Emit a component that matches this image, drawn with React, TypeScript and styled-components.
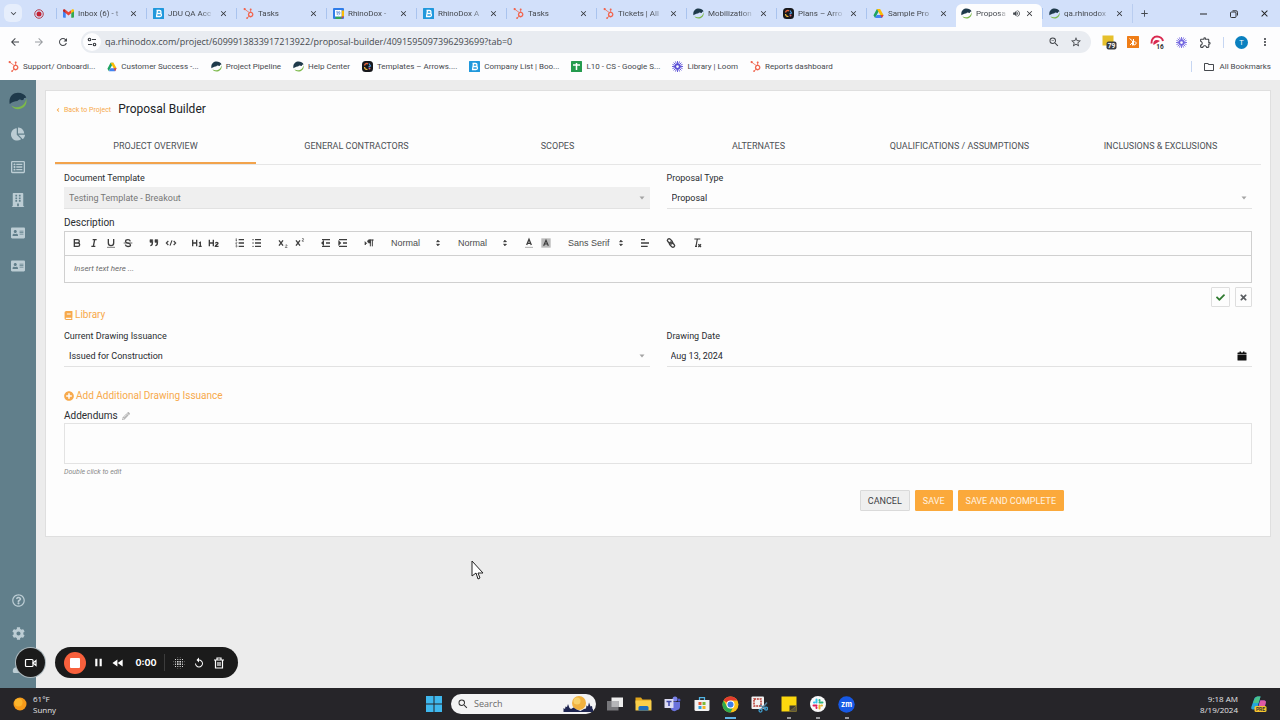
import React from "react";
import styled, { createGlobalStyle, css } from "styled-components";
import {
  FaHubspot,
  FaChartPie,
  FaRegListAlt,
  FaBuilding,
  FaAddressCard,
  FaRegQuestionCircle,
  FaCog,
  FaUser,
  FaBook,
  FaPlusCircle,
  FaPencilAlt,
  FaCheck,
  FaTimes,
  FaAngleLeft,
} from "react-icons/fa";
import {
  MdArrowBack,
  MdArrowForward,
  MdRefresh,
  MdZoomOut,
  MdStarBorder,
  MdOutlineExtension,
  MdMoreVert,
  MdOutlineFolder,
  MdKeyboardArrowDown,
  MdClose,
  MdAdd,
  MdVolumeUp,
  MdSearch,
  MdPause,
  MdFastRewind,
  MdBlurOn,
  MdReplay,
} from "react-icons/md";

const ui = `"Open Sans", "Noto Sans", sans-serif`;
const app = `Roboto, "Liberation Sans", sans-serif`;
const orange = "#f7a94b";

const GlobalStyle = createGlobalStyle`
  *, *::before, *::after { box-sizing: border-box; }
  body { margin: 0; font-family: ${app}; color: #2d3033; }
  button, input, select, textarea { font: inherit; color: inherit; margin: 0; }
  button { border: 0; padding: 0; background: none; cursor: pointer; }
  a { color: inherit; text-decoration: none; }
  svg { display: block; flex: none; }
`;

const Screen = styled.div`
  display: flex;
  flex-direction: column;
  min-height: 100vh;
  position: relative;
  background: #ececec;
  overflow: hidden;
`;

/* ---------- browser ---------- */

const TabStrip = styled.div`
  display: flex;
  align-items: flex-end;
  height: 27px;
  background: #d2e0fa;
  font: 8px/12px ${app};
  color: #44484e;
`;

const TabSearch = styled.button`
  display: grid;
  place-items: center;
  width: 18px;
  height: 18px;
  margin: 0 0 5px 4px;
  border-radius: 6px;
  background: #e6eefc;
`;

const PinnedTab = styled.button`
  display: grid;
  place-items: center;
  width: 34px;
  height: 22px;
  padding-bottom: 4px;
`;

const Tab = styled.div<{ $active?: boolean }>`
  display: flex;
  align-items: center;
  flex: 0 1 ${(p) => (p.$active ? 86 : 90)}px;
  min-width: 0;
  height: 23px;
  padding: 0 8px 4px 7px;
  gap: 4px;
  ${(p) =>
    p.$active
      ? css`
          background: #fdfdfe;
          border-radius: 6px 6px 0 0;
          padding-left: 5px;
        `
      : css`
          background: linear-gradient(#a9c3ee, #a9c3ee) left 0 top 4px / 1px 11px no-repeat;
        `}
`;

const TabTitle = styled.a`
  flex: 1;
  min-width: 0;
  overflow: hidden;
  white-space: nowrap;
  mask-image: linear-gradient(90deg, #000 70%, transparent);
`;

const TabClose = styled.button`
  display: grid;
  place-items: center;
  width: 9px;
  color: #2f3135;
`;

const NewTab = styled.button`
  display: grid;
  place-items: center;
  width: 24px;
  height: 19px;
  margin-bottom: 4px;
  border-left: 1px solid #b9cdf0;
`;

const WindowControls = styled.div`
  display: flex;
  margin-left: auto;
  height: 27px;
  padding-right: 1px;
`;

const WindowButton = styled.button`
  display: grid;
  place-items: center;
  width: 30px;
  color: #222;
`;

const AddressRow = styled.div`
  display: flex;
  align-items: center;
  height: 30px;
  padding: 0 8px 0 3px;
  background: #fdfdfe;
  color: #43464b;
`;

const IconButton = styled.button<{ $w?: number }>`
  display: grid;
  place-items: center;
  width: ${(p) => p.$w ?? 24}px;
  height: 22px;
`;

const AddressBar = styled.div`
  display: flex;
  align-items: center;
  flex: 1;
  min-width: 0;
  height: 22px;
  margin: 0 6px;
  padding: 0 4px 0 2px;
  border-radius: 11px;
  background: #e9ecf1;
`;

const SiteInfo = styled.button`
  display: grid;
  place-items: center;
  width: 18px;
  height: 18px;
  border-radius: 50%;
  background: #fdfdfe;
`;

const AddressInput = styled.input`
  flex: 1;
  min-width: 0;
  padding: 0 0 0 4px;
  border: 0;
  background: none;
  font: 9px/14px ${ui};
  color: #45494e;
`;

const Divider = styled.span`
  width: 1px;
  height: 11px;
  margin-left: 6px;
  background: #c6d6f2;
`;

const Profile = styled.button`
  display: grid;
  place-items: center;
  width: 13px;
  height: 13px;
  margin: 0 10px 0 11px;
  border-radius: 50%;
  background: #0a80bf;
  color: #fff;
  font: 8px/12px ${ui};
`;

const BookmarkRow = styled.nav`
  display: flex;
  align-items: center;
  gap: 12px;
  height: 23px;
  padding: 0 9px 4px 8px;
  background: #fdfdfe;
  font: 8px/12px ${app};
  color: #46494e;
`;

const Bookmark = styled.a`
  display: flex;
  align-items: center;
  gap: 4px;
  white-space: nowrap;
`;

const AllBookmarks = styled.div`
  display: flex;
  align-items: center;
  gap: 11px;
  margin-left: auto;
`;

/* ---------- application ---------- */

const Workspace = styled.div`
  display: flex;
  flex: 1;
`;

const Sidebar = styled.nav`
  display: flex;
  flex-direction: column;
  align-items: center;
  width: 36px;
  padding: 11px 0 5px;
  background: #617f8b;
  color: #bccdd4;
`;

const SideLink = styled.a<{ $push?: boolean }>`
  display: grid;
  place-items: center;
  width: 36px;
  height: 33px;
  margin-top: ${(p) => (p.$push ? "auto" : "0")};
`;

const BrandLink = styled.a`
  display: grid;
  place-items: center;
  height: 20px;
  margin-bottom: 6px;
`;

const Main = styled.main`
  flex: 1;
  min-width: 0;
  padding: 10px 9px 0;
`;

const Card = styled.section`
  padding: 0 9px 25px;
  border: 1px solid #dfdfdf;
  background: #fdfdfd;
`;

const CardHeader = styled.header`
  display: flex;
  align-items: center;
  gap: 7px;
  height: 35px;
`;

const BackLink = styled.a`
  display: flex;
  align-items: center;
  gap: 3px;
  padding-top: 3px;
  font-size: 7px;
  line-height: 12px;
  color: ${orange};
`;

const Title = styled.h1`
  margin: 0;
  font-size: 12px;
  font-weight: 400;
  line-height: 20px;
  color: #202327;
`;

const StepTabs = styled.div`
  display: grid;
  grid-template-columns: repeat(6, 1fr);
  border-bottom: 1px solid #e6e6e6;
`;

const StepTab = styled.button<{ $active?: boolean }>`
  height: 38px;
  padding-top: 3px;
  border-bottom: 2px solid ${(p) => (p.$active ? "#f2a34c" : "transparent")};
  font-size: 9px;
  line-height: 12px;
  color: #4d5156;
`;

const Form = styled.form`
  display: flex;
  flex-direction: column;
  padding: 6px 9px 0;
`;

const Columns = styled.div`
  display: grid;
  grid-template-columns: 1fr 1fr;
  gap: 17px;
`;

const Field = styled.div`
  display: flex;
  flex-direction: column;
  min-width: 0;
`;

const Label = styled.label<{ $large?: boolean }>`
  font-size: ${(p) => (p.$large ? 10 : 9)}px;
  line-height: 14px;
  color: #2a2d31;
`;

const Control = styled.div<{ $disabled?: boolean }>`
  display: flex;
  align-items: center;
  height: 22px;
  margin-top: 2px;
  padding-right: 5px;
  border-bottom: 1px solid #e2e2e2;
  background: ${(p) => (p.$disabled ? "#efefef" : "none")};
  color: ${(p) => (p.$disabled ? "#777" : "#26292d")};
  font-size: 9px;
`;

const plain = css`
  flex: 1;
  min-width: 0;
  padding: 0 0 0 5px;
  border: 0;
  background: none;
  appearance: none;
  opacity: 1;
  line-height: 14px;
`;

const Select = styled.select`
  ${plain}
`;

const DateInput = styled.input`
  ${plain}
  padding-left: 4px;
`;

const CalendarButton = styled.button`
  color: #111;
`;

const DescriptionLabel = styled(Label)`
  margin-top: 7px;
`;

const Editor = styled.div`
  margin-top: 1px;
  border: 1px solid #d0d0d0;
`;

const EditorToolbar = styled.div`
  display: flex;
  align-items: center;
  gap: 9px;
  height: 24px;
  padding: 0 0 1px 3px;
  border-bottom: 1px solid #d0d0d0;
`;

const ToolGroup = styled.div`
  display: flex;
`;

const ToolButton = styled.button`
  display: grid;
  place-items: center;
  width: 17px;
  height: 16px;
  color: #3d3d3d;
`;

const Picker = styled.div<{ $w: number }>`
  display: flex;
  align-items: center;
  width: ${(p) => p.$w}px;
  font: 9px/14px "Liberation Sans", Arial, sans-serif;
  color: #4c4c4c;
`;

const EditorText = styled.textarea`
  display: block;
  width: 100%;
  height: 26px;
  padding: 6px 9px;
  border: 0;
  background: none;
  resize: none;
  font: italic 8px/14px ${app};
  &::placeholder {
    color: #6a6a6a;
    opacity: 1;
  }
`;

const EditorActions = styled.div`
  display: flex;
  justify-content: flex-end;
  gap: 5px;
  margin: 4px 0 1px;
`;

const SquareButton = styled.button<{ $w: number }>`
  display: grid;
  place-items: center;
  width: ${(p) => p.$w}px;
  height: 20px;
  border: 1px solid #dedede;
  border-radius: 1px;
  color: #5a5d61;
`;

const ActionLink = styled.button`
  display: flex;
  align-items: center;
  gap: 2px;
  align-self: flex-start;
  font-size: 10px;
  line-height: 14px;
  color: ${orange};
`;

const LibraryButton = styled(ActionLink)`
  margin-bottom: 7px;
`;

const AddButton = styled(ActionLink)`
  margin: 22px 0 6px;
`;

const LabelRow = styled.div`
  display: flex;
  align-items: center;
  gap: 4px;
`;

const Addendums = styled.textarea`
  height: 41px;
  border: 1px solid #e3e3e3;
  background: none;
  resize: none;
`;

const Hint = styled.p`
  margin: 2px 0 0;
  font-size: 7px;
  font-style: italic;
  line-height: 12px;
  color: #8a8a8a;
`;

const FormActions = styled.div`
  display: flex;
  justify-content: flex-end;
  gap: 5px;
  margin-top: 12px;
  padding-right: 188px;
`;

const FormButton = styled.button<{ $primary?: boolean }>`
  height: 21px;
  padding: 0 7px;
  border: 1px solid ${(p) => (p.$primary ? "#fba93b" : "#dadada")};
  border-radius: 1px;
  background: ${(p) => (p.$primary ? "#fba93b" : "#efefef")};
  color: ${(p) => (p.$primary ? "#fff3e2" : "#3f4246")};
  font-size: 9px;
  line-height: 12px;
`;

/* ---------- recorder ---------- */

const Recorder = styled.div`
  position: absolute;
  left: 16px;
  bottom: 42px;
  display: flex;
  align-items: center;
  gap: 10px;
  color: #fff;
`;

const CameraButton = styled.button`
  display: grid;
  place-items: center;
  width: 29px;
  height: 29px;
  border-radius: 50%;
  background: #1b1b1b;
  box-shadow: 0 0 0 1px #aab6bb;
`;

const RecorderPill = styled.div`
  display: flex;
  align-items: center;
  width: 183px;
  height: 31px;
  padding: 0 9px;
  border-radius: 16px;
  background: #1b1b1b;
`;

const StopButton = styled.button`
  display: grid;
  place-items: center;
  width: 22px;
  height: 22px;
  margin-right: 2px;
  border-radius: 50%;
  background: #f8603c;
`;

const RecorderButton = styled.button`
  display: grid;
  place-items: center;
  width: 20px;
  height: 22px;
`;

const Elapsed = styled.time`
  flex: 1;
  text-align: center;
  font: 700 9px/14px Inter, sans-serif;
`;

const RecorderDivider = styled.span`
  width: 1px;
  height: 17px;
  margin-right: 4px;
  background: #3c3c3c;
`;

const Pointer = styled.svg`
  position: absolute;
  left: 471px;
  top: 560px;
`;

/* ---------- taskbar ---------- */

const Taskbar = styled.footer`
  display: grid;
  grid-template-columns: 1fr auto 1fr;
  align-items: center;
  height: 32px;
  background: #262529;
  font: 8px/11px ${ui};
  color: #e4e4e6;
`;

const Weather = styled.button`
  display: flex;
  align-items: center;
  gap: 6px;
  padding-left: 13px;
  text-align: left;
`;

const TaskIcons = styled.div`
  display: flex;
  align-items: center;
`;

const TaskButton = styled.button<{ $mark?: string }>`
  display: grid;
  place-items: center;
  width: 29px;
  height: 32px;
  background: ${(p) =>
    p.$mark
      ? `linear-gradient(${p.$mark}, ${p.$mark}) center bottom 1px / ${p.$mark === "#63b4e6" ? 11 : 4}px 2px no-repeat`
      : "none"};
`;

const SearchBox = styled.label`
  display: flex;
  align-items: center;
  width: 145px;
  height: 20px;
  margin: 0 4px 0 3px;
  padding: 0 3px 0 6px;
  border-radius: 10px;
  background: #f3f3f4;
  color: #333;
`;

const SearchInput = styled.input`
  flex: 1;
  min-width: 0;
  padding: 0 0 0 5px;
  border: 0;
  background: none;
  font: 9px/14px ${ui};
  &::placeholder {
    color: #6b6b6b;
    opacity: 1;
  }
`;

const Tray = styled.div`
  display: flex;
  align-items: center;
  justify-content: flex-end;
  gap: 12px;
  padding-right: 13px;
  text-align: right;
`;

const Stack = styled.span`
  display: flex;
  flex-direction: column;
  padding-bottom: 1px;
`;

/* ---------- drawings ---------- */

type Size = { s?: number };

const Rhino = ({ s = 12 }: Size) => (
  <svg width={s} height={s} viewBox="0 0 24 24">
    <path d="M1 16C-1 7 5 1 12 1c5 0 9 2 11 6-1 1-2 1-3 1 0 2-1 3-3 3-2-2-4-1-6 1-3 0-6 1-10 4z" fill="#1f3a4b" />
    <path d="M23 9c2 8-4 14-11 14-4 0-7-2-9-5 4 3 9 3 13 1 4-2 6-5 7-10z" fill="#7cb94a" />
  </svg>
);

const Hub = ({ s = 12 }: Size) => <FaHubspot size={s} color="#f0654f" />;

const BlueB = ({ s = 11 }: Size) => (
  <svg width={s} height={s} viewBox="0 0 22 22">
    <rect width="22" height="22" rx="1" fill="#2098dc" />
    <path d="M7 5h6a3 3 0 0 1 0 6H9h5a3 3 0 0 1 0 6H6M9 5L7 17" fill="none" stroke="#fff" strokeWidth="2.6" />
  </svg>
);

const Gmail = () => (
  <svg width="11" height="9" viewBox="0 0 24 18">
    <path d="M0 3v13a2 2 0 0 0 2 2h4V7z" fill="#4285f4" />
    <path d="M24 3v13a2 2 0 0 1-2 2h-4V7z" fill="#34a853" />
    <path d="M6 1.500l6 5 6-5v7l-6 5-6-5z" fill="#ea4335" />
    <path d="M0 2.500C0 0 3-1 5 .800L6 1.500v7L0 4z" fill="#c5221f" />
    <path d="M24 2.500C24 0 21-1 19 .800L18 1.500v7L24 4z" fill="#fbbc04" />
  </svg>
);

const Calendar = () => (
  <svg width="11" height="11" viewBox="0 0 22 22">
    <rect width="22" height="22" rx="2" fill="#2f7de9" />
    <path d="M17 5h5v12h-5z" fill="#fbbc04" />
    <path d="M5 17h12v5H5z" fill="#34a853" />
    <path d="M17 22v-5h5z" fill="#ea4335" />
    <rect x="4" y="4" width="13" height="13" fill="#fff" />
    <path d="M6.500 8l2-1.200V14M11 14c3 0 3.500-7 1.500-7s-2.500 4 0 4" fill="none" stroke="#2f6fd0" strokeWidth="1.400" />
  </svg>
);

const Drive = ({ s = 11 }: Size) => (
  <svg width={s} height={s} viewBox="0 0 24 24">
    <path d="M8.500 2h7L8 15l-3.500 7L1 16z" fill="#1ea362" />
    <path d="M8.500 2h7L23 15h-7z" fill="#fbbc04" />
    <path d="M4.500 22L8 15h15l-3.500 7z" fill="#4285f4" />
    <path d="M16 15h7l-3.500 7z" fill="#ea4335" />
  </svg>
);

const Arrows = ({ s = 11 }: Size) => (
  <svg width={s} height={s} viewBox="0 0 22 22">
    <rect width="22" height="22" rx="7" fill="#17181c" />
    <path d="M5 9c1-4 5-5 7-3" fill="none" stroke="#e9643a" strokeWidth="2.600" />
    <path d="M5 12c0 4 3 5 6 5" fill="none" stroke="#f0b93d" strokeWidth="2.400" />
    <path d="M14 5l3 5-4 2" fill="none" stroke="#4b9ae0" strokeWidth="2.400" />
    <circle cx="15" cy="15" r="2" fill="#d8647c" />
  </svg>
);

const Sheets = () => (
  <svg width="11" height="11" viewBox="0 0 22 22">
    <rect width="22" height="22" rx="1" fill="#259b4e" />
    <path d="M4 8h14M11 4v14" stroke="#fff" strokeWidth="3" />
  </svg>
);

const Loom = ({ s = 11, color = "#5b50d6" }: Size & { color?: string }) => (
  <svg width={s} height={s} viewBox="0 0 24 24" fill="none" stroke={color}>
    <circle cx="12" cy="12" r="4.500" strokeWidth="3" />
    <path
      d="M12 0v7M12 17v7M0 12h7M17 12h7M3.500 3.500l5 5M15.500 15.500l5 5M20.500 3.500l-5 5M8.500 15.500l-5 5M7.400 1l2.700 6.400M13.900 16.600L16.600 23M1 16.600l6.400-2.700M16.600 10.100L23 7.400M1 7.400l6.400 2.700M16.600 13.900l6.400 2.700M7.400 23l2.700-6.400M13.900 7.400L16.600 1"
      strokeWidth="2"
    />
  </svg>
);

const Record = () => (
  <svg width="10" height="10" viewBox="0 0 20 20">
    <circle cx="10" cy="10" r="8.500" fill="none" stroke="#b33a48" strokeWidth="2" />
    <circle cx="10" cy="10" r="5" fill="#c42033" />
  </svg>
);

const Tune = () => (
  <svg width="10" height="10" viewBox="0 0 20 20" fill="none" stroke="#3c3f44" strokeWidth="2.400">
    <circle cx="5" cy="5" r="2.500" />
    <path d="M10 5h8M2 15h8" />
    <circle cx="15" cy="15" r="2.500" />
  </svg>
);

const NotesExtension = () => (
  <svg width="15" height="15" viewBox="0 0 30 30">
    <rect x="1" y="1" width="22" height="20" fill="#e6c02c" />
    <rect x="9" y="13" width="20" height="16" rx="4" fill="#3a3d41" />
    <text x="19" y="26" fontSize="13" fontWeight="700" fill="#fff" textAnchor="middle" fontFamily="Roboto">79</text>
  </svg>
);

const HubExtension = () => (
  <svg width="12" height="12" viewBox="0 0 24 24">
    <rect width="24" height="24" rx="1" fill="#ef7d17" />
    <path d="M5 5l6 5v9M13 6v12M13 12c6-3 8 6 0 6M6 18l5-5" fill="none" stroke="#fff" strokeWidth="2" />
  </svg>
);

const CallExtension = () => (
  <svg width="15" height="15" viewBox="0 0 30 30">
    <path d="M3 17C2 8 8 3 14 3s11 4 12 9" fill="none" stroke="#d9294f" strokeWidth="4" />
    <path d="M7 20c-2-9 6-13 13-8l-5 3z" fill="#d9294f" />
    <text x="20" y="28" fontSize="13" fontWeight="700" fill="#333" textAnchor="middle" fontFamily="Roboto">16</text>
  </svg>
);

const Restore = () => (
  <svg width="8" height="8" viewBox="0 0 16 16" fill="none" stroke="currentColor" strokeWidth="1.800">
    <rect x="1" y="4" width="11" height="11" rx="2" />
    <path d="M5 1.500h7a3 3 0 0 1 3 3V11" />
  </svg>
);

const Caret = () => (
  <svg width="6" height="4" viewBox="0 0 12 8">
    <path d="M1 1h10L6 7z" fill="#a4a4a4" />
  </svg>
);

const UpDown = () => (
  <svg width="12" height="12" viewBox="0 0 18 18" fill="#3d3d3d" stroke="#3d3d3d" strokeWidth="1.500" strokeLinejoin="round">
    <path d="M7 11l2 2 2-2zM7 7l2-2 2 2z" />
  </svg>
);

const CalendarSolid = () => (
  <svg width="10" height="10" viewBox="0 0 20 20" fill="currentColor">
    <path d="M2 3h3V1h3v2h4V1h3v2h3a1 1 0 0 1 1 1v3H1V4a1 1 0 0 1 1-1zM1 8h18v10a1 1 0 0 1-1 1H2a1 1 0 0 1-1-1z" />
  </svg>
);

const Trash = () => (
  <svg width="12" height="12" viewBox="0 0 24 24" fill="none" stroke="#fff" strokeWidth="2.400">
    <path d="M2 6h20M8 5V2h8v3M5 6v16h14V6M10 10v8M14 10v8" />
  </svg>
);

const Camera = () => (
  <svg width="14" height="12" viewBox="0 0 28 24" fill="none" stroke="#fff" strokeWidth="2.400">
    <rect x="3" y="5" width="15" height="14" rx="2" />
    <path d="M18 12l6-5v10z" />
  </svg>
);

/* Rich-text toolbar glyphs on an 18-unit grid */
const glyphs: Record<string, React.ReactNode> = {
  Bold: <path d="M5 4h5a2.500 2.500 0 0 1 0 5H5zM5 9h5.500a2.500 2.500 0 0 1 0 5H5z" />,
  Italic: <path d="M7 4h6M5 14h6M8 14l2-10" />,
  Underline: (
    <>
      <path d="M5 3v6a4.012 4.012 0 0 0 4 4 4.012 4.012 0 0 0 4-4V3" />
      <path d="M3 15.500h12" strokeWidth="1" />
    </>
  ),
  Strike: (
    <>
      <path d="M2.500 9h13" strokeWidth="1.200" />
      <path d="M12.500 6.500C12 4.800 10.500 4 9 4 7 4 5.300 5 5.300 6.700 5.300 8.500 7.500 8.800 9 9.200c2 .500 3.700 1 3.700 2.700C12.700 13.500 11 14.200 9 14.200c-2 0-3.600-1-4-2.700" />
    </>
  ),
  Blockquote: (
    <g fill="currentColor" strokeWidth="1">
      <path d="M3 4h4v4H3zM10.500 4h4v4h-4z" />
      <path d="M6.500 7c0 4 0 5-3 6M14 7c0 4 0 5-3 6" fill="none" strokeWidth="2.200" />
    </g>
  ),
  Code: <path d="M5 6L2 9l3 3M13 6l3 3-3 3M10.500 5l-3 8" strokeWidth="1.700" />,
  "Numbered list": (
    <>
      <path d="M7 4h8M7 9h8M7 14h8" />
      <path d="M2.500 5.500h2M3.500 5.500v-3l-1 .500M4.500 10.500h-2c0-1 1.900-1.200 1.900-2 0-.900-1.500-.900-1.900-.200M2.500 14.600c.500.700 2 .500 2-.300 0-.800-1.300-.700-1.300-.700s1.200 0 1.100-.800c-.100-.700-1.400-.700-1.700 0" strokeWidth="1" />
    </>
  ),
  "Bulleted list": (
    <>
      <path d="M6 4h9M6 9h9M6 14h9" />
      <path d="M3 4h.100M3 9h.100M3 14h.100" strokeLinecap="round" />
    </>
  ),
  Subscript: (
    <>
      <path d="M3 5l6 8M9 5l-6 8" />
      <path d="M12.500 12.500c.500-1.200 2.500-1 2.500.200 0 1-2.500 1.500-2.500 3H15.500" strokeWidth="1" />
    </>
  ),
  Superscript: (
    <>
      <path d="M3 5l6 8M9 5l-6 8" />
      <path d="M12 3c.500-1.200 2.500-1 2.500.200 0 1-2.500 1.500-2.500 3H15" strokeWidth="1" />
    </>
  ),
  Outdent: <path d="M3 14h12M3 4h12M9 9h6M5 7v4L3 9z" />,
  Indent: <path d="M3 14h12M3 4h12M9 9h6M3 7v4l2-2z" />,
  Direction: (
    <>
      <path d="M3 7v5l2.500-2.500z" fill="currentColor" strokeWidth="1" />
      <path d="M11 4.500H16M11 4v10M14 4v10" strokeWidth="1.500" />
      <path d="M11 4H9.500a2.500 2.500 0 0 0 0 5H11z" fill="currentColor" strokeWidth="1" />
    </>
  ),
  "Text color": (
    <>
      <path d="M3 15.500h12" strokeWidth="1.500" opacity=".4" />
      <path d="M5.500 12L9 3.500 12.500 12M7 9.500h4" />
    </>
  ),
  "Background color": (
    <>
      <path d="M2 2h14v14H2z" fill="currentColor" stroke="none" opacity=".35" />
      <path d="M5.500 13L9 5l3.500 8M7 10.500h4" strokeWidth="1.800" />
    </>
  ),
  Align: <path d="M3 9h12M3 14h10M3 4h6" />,
  Link: (
    <g transform="rotate(90 9 9)">
      <rect x="2" y="8" width="9" height="5" rx="2.500" transform="rotate(-45 6.500 10.500)" />
      <rect x="7" y="5" width="9" height="5" rx="2.500" transform="rotate(-45 11.500 7.500)" />
    </g>
  ),
  "Clear formatting": (
    <>
      <path d="M5 3h9M6 14h3M9.500 3L7.500 14" strokeWidth="1.800" />
      <path d="M11 11l4 4M15 11l-4 4" />
    </>
  ),
};

const headings: Record<string, React.ReactNode> = {
  "Heading 1": <path d="M2.500 4v10M8.500 4v10M2.500 9h6M11.500 14h4.500M14 14V8l-2 1" />,
  "Heading 2": <path d="M2 4v10M8 4v10M2 9h6M11 9.500c.500-2 4-2 4 0 0 1.600-4 2.500-4 4.500H15.800" />,
};

const Tools = ({ names }: { names: string[] }) => (
  <ToolGroup>
    {names.map((n) => (
      <ToolButton key={n} type="button" aria-label={n}>
        <svg width="12" height="12" viewBox="0 0 18 18" fill="none" stroke="currentColor" strokeWidth="2">
          {glyphs[n] ?? headings[n]}
        </svg>
      </ToolButton>
    ))}
  </ToolGroup>
);

const FormatPicker = ({ label, value, w }: { label: string; value: string; w: number }) => (
  <Picker $w={w}>
    <Select aria-label={label} defaultValue={value}>
      <option>{value}</option>
    </Select>
    <UpDown />
  </Picker>
);

/* Taskbar drawings */
const Windows = () => (
  <svg width="16" height="16" viewBox="0 0 32 32" fill="#3fb8ee">
    <path d="M0 0h15v15H0zM17 0h15v15H17zM0 17h15v15H0zM17 17h15v15H17z" />
  </svg>
);

const Moon = () => (
  <svg width="30" height="18" viewBox="0 0 60 36">
    <circle cx="32" cy="16" r="14" fill="#f0b13f" />
    <circle cx="28" cy="12" r="7" fill="#f8d16b" />
    <path d="M1 34v-8l3 2 1-5 3 1 2-6 3 8 3 2 5-3 6 4 8 3 7-4 4-1 1-6 3 2 2-8 3 8 3-1 1 6 2 1v5z" fill="#1e2550" />
  </svg>
);

const TaskView = () => (
  <svg width="16" height="16" viewBox="0 0 32 32">
    <rect x="9" y="3" width="23" height="19" fill="#ededed" />
    <rect x="0" y="10" width="23" height="19" fill="#77777b" />
    <rect x="9" y="10" width="14" height="12" fill="#b6b6b9" />
  </svg>
);

const Explorer = () => (
  <svg width="17" height="16" viewBox="0 0 34 32">
    <path d="M1 3h11l3 4h17v8H1z" fill="#e0a51c" />
    <path d="M1 9h32v20H1z" fill="#f9cf4a" />
    <path d="M7 29v-6q0-3 3-3h14q3 0 3 3v6z" fill="#1d6fbe" />
  </svg>
);

const Teams = () => (
  <svg width="17" height="16" viewBox="0 0 34 32">
    <circle cx="22" cy="6" r="5" fill="#7b83eb" />
    <circle cx="30" cy="8" r="3" fill="#5059c9" />
    <path d="M13 12h19v10q-1 6-6 6-3 3-7 2-6-2-6-8z" fill="#6a72dc" />
    <rect x="1" y="6" width="18" height="18" rx="1" fill="#dcdcf4" />
    <path d="M5 11h10M10 11v9" stroke="#3d46a8" strokeWidth="3" />
  </svg>
);

const Store = () => (
  <svg width="16" height="16" viewBox="0 0 32 32">
    <path d="M11 8V3h10v5" fill="none" stroke="#52b4e4" strokeWidth="2.500" />
    <path d="M1 8h30v19q0 3-3 3H4q-3 0-3-3z" fill="#f2f2f2" />
    <path d="M9 12h6v6H9z" fill="#e25a35" />
    <path d="M17 12h6v6h-6z" fill="#7db935" />
    <path d="M9 20h6v6H9z" fill="#2c9fdc" />
    <path d="M17 20h6v6h-6z" fill="#f2b424" />
  </svg>
);

const Chrome = () => (
  <svg width="17" height="17" viewBox="0 0 34 34">
    <circle cx="17" cy="17" r="16" fill="#fbc116" />
    <path d="M17 17L3.100 9A16 16 0 0 1 30.900 9H17z" fill="#e33b2e" />
    <path d="M17 33A16 16 0 0 1 3.100 9L10 21q3 4 7 4h4z" fill="#2da94f" />
    <circle cx="17" cy="17" r="8" fill="#fff" />
    <circle cx="17" cy="17" r="6" fill="#3b7de9" />
  </svg>
);

const Snip = () => (
  <svg width="17" height="17" viewBox="0 0 34 34">
    <rect x="1" y="1" width="25" height="25" rx="2" fill="#f3f3f3" />
    <rect x="6" y="6" width="14" height="14" fill="none" stroke="#b8382f" strokeWidth="3" strokeDasharray="4 1.600" />
    <path d="M32 13L21 26M18 18l12 8" stroke="#56809a" strokeWidth="3" />
    <circle cx="19" cy="29" r="3" fill="none" stroke="#3fa2d4" strokeWidth="2.500" />
    <circle cx="30" cy="25" r="3" fill="none" stroke="#3fa2d4" strokeWidth="2.500" />
  </svg>
);

const Sticky = () => (
  <svg width="16" height="16" viewBox="0 0 32 32">
    <path d="M1 1h30v30H1z" fill="#fcd80e" />
    <path d="M17 31V19h14z" fill="#3d3a30" />
    <path d="M17 31h14V19z" fill="#5b5540" />
  </svg>
);

const Slack = () => (
  <svg width="16" height="16" viewBox="0 0 32 32" strokeWidth="4" strokeLinecap="round">
    <circle cx="16" cy="16" r="16" fill="#fafafa" />
    <path d="M13 7v6M8 13h1" stroke="#36c5f0" />
    <path d="M19 13h6M19 8v1" stroke="#2eb67d" />
    <path d="M19 19v6M23 19h1" stroke="#ecb22e" />
    <path d="M7 19h6M13 23v1" stroke="#e01e5a" />
  </svg>
);

const Zoom = () => (
  <svg width="17" height="17" viewBox="0 0 34 34">
    <circle cx="17" cy="17" r="16.500" fill="#1759e6" />
    <text x="17" y="22" fontSize="15" fontWeight="700" fill="#fff" textAnchor="middle" fontFamily="Inter">zm</text>
  </svg>
);

const Copilot = () => (
  <svg width="17" height="17" viewBox="0 0 34 34">
    <path d="M9 4q2-3 6-3h6l-6 22q-1 4-5 4H6q-5 0-3-6z" fill="#25a6d9" />
    <path d="M6 14q4-13 9-13h6l-4 13z" fill="#4cc38a" />
    <path d="M20 9h8q5 0 3 6l-2 8q-1 4-5 4h-9z" fill="#a55be0" />
    <path d="M21 9h7q5 0 3 6l-1 5H18z" fill="#e05aa4" />
    <rect x="9" y="20" width="24" height="12" rx="3" fill="#f7c52d" />
    <text x="21" y="30" fontSize="10" fontWeight="700" fill="#333" textAnchor="middle" fontFamily="Roboto">PRE</text>
  </svg>
);

/* ---------- data ---------- */

const browserTabs: { title: string; icon: React.ReactNode; active?: boolean }[] = [
  { title: "Inbox (6) - t", icon: <Gmail /> },
  { title: "JDU QA Acc", icon: <BlueB /> },
  { title: "Tasks", icon: <Hub s={11} /> },
  { title: "RhinoDox -", icon: <Calendar /> },
  { title: "RhinoDox A", icon: <BlueB /> },
  { title: "Tasks", icon: <Hub s={11} /> },
  { title: "Tickets | All", icon: <Hub s={11} /> },
  { title: "Mobilization", icon: <Rhino s={11} /> },
  { title: "Plans – Arro", icon: <Arrows /> },
  { title: "Sample Pro", icon: <Drive /> },
  { title: "Proposa", icon: <Rhino s={11} />, active: true },
  { title: "qa.rhinodox", icon: <Rhino s={11} /> },
];

const bookmarks: [string, React.ReactNode][] = [
  ["Support/ Onboardi...", <Hub s={11} />],
  ["Customer Success -...", <Drive s={10} />],
  ["Project Pipeline", <Rhino s={11} />],
  ["Help Center", <Rhino s={11} />],
  ["Templates – Arrows....", <Arrows />],
  ["Company List | Boo...", <BlueB />],
  ["L10 - CS - Google S...", <Sheets />],
  ["Library | Loom", <Loom />],
  ["Reports dashboard", <Hub s={11} />],
];

const steps = [
  "PROJECT OVERVIEW",
  "GENERAL CONTRACTORS",
  "SCOPES",
  "ALTERNATES",
  "QUALIFICATIONS / ASSUMPTIONS",
  "INCLUSIONS & EXCLUSIONS",
];

const sideLinks: [string, React.ReactNode][] = [
  ["Reports", <FaChartPie size={14} />],
  ["Projects", <FaRegListAlt size={14} />],
  ["Companies", <FaBuilding size={14} />],
  ["Contacts", <FaAddressCard size={14} />],
  ["Team", <FaAddressCard size={14} />],
];

const taskApps: [string, React.ReactNode, string?][] = [
  ["Task View", <TaskView />],
  ["File Explorer", <Explorer />],
  ["Teams", <Teams />],
  ["Store", <Store />],
  ["Chrome", <Chrome />, "#63b4e6"],
  ["Snipping Tool", <Snip />],
  ["Sticky Notes", <Sticky />, "#9b9b9f"],
  ["Slack", <Slack />, "#9b9b9f"],
  ["Zoom", <Zoom />, "#9b9b9f"],
];

/* ---------- sections ---------- */

const BrowserChrome = () => (
  <header>
    <TabStrip>
      <TabSearch aria-label="Search tabs"><MdKeyboardArrowDown size={11} /></TabSearch>
      <PinnedTab aria-label="Recording"><Record /></PinnedTab>
      {browserTabs.map((t, i) => (
        <Tab key={i} $active={t.active}>
          {t.icon}
          <TabTitle href="#">{t.title}</TabTitle>
          {t.active && <MdVolumeUp size={9} />}
          <TabClose aria-label={`Close ${t.title}`}><MdClose size={9} /></TabClose>
        </Tab>
      ))}
      <NewTab aria-label="New tab"><MdAdd size={11} /></NewTab>
      <WindowControls>
        <WindowButton aria-label="Minimize">
          <svg width="8" height="8" viewBox="0 0 8 8"><path d="M0 4h7" stroke="currentColor" /></svg>
        </WindowButton>
        <WindowButton aria-label="Restore"><Restore /></WindowButton>
        <WindowButton aria-label="Close window"><MdClose size={11} /></WindowButton>
      </WindowControls>
    </TabStrip>
    <AddressRow>
      <IconButton aria-label="Back"><MdArrowBack size={12} /></IconButton>
      <IconButton aria-label="Forward"><MdArrowForward size={12} color="#9a9da1" /></IconButton>
      <IconButton aria-label="Reload"><MdRefresh size={12} /></IconButton>
      <AddressBar>
        <SiteInfo aria-label="Site information"><Tune /></SiteInfo>
        <AddressInput
          aria-label="Address"
          defaultValue="qa.rhinodox.com/project/6099913833917213922/proposal-builder/4091595097396293699?tab=0"
        />
        <IconButton $w={22} aria-label="Zoom"><MdZoomOut size={12} /></IconButton>
        <IconButton $w={22} aria-label="Bookmark"><MdStarBorder size={12} /></IconButton>
      </AddressBar>
      <IconButton aria-label="Notes"><NotesExtension /></IconButton>
      <IconButton aria-label="HubSpot"><HubExtension /></IconButton>
      <IconButton aria-label="Calls"><CallExtension /></IconButton>
      <IconButton aria-label="Loom"><Loom color="#7468e0" /></IconButton>
      <IconButton aria-label="Extensions"><MdOutlineExtension size={13} /></IconButton>
      <Divider />
      <Profile aria-label="Profile">T</Profile>
      <IconButton $w={14} aria-label="Menu"><MdMoreVert size={12} /></IconButton>
    </AddressRow>
    <BookmarkRow aria-label="Bookmarks">
      {bookmarks.map(([label, icon]) => (
        <Bookmark key={label} href="#">{icon}{label}</Bookmark>
      ))}
      <AllBookmarks>
        <Divider />
        <Bookmark href="#"><MdOutlineFolder size={12} />All Bookmarks</Bookmark>
      </AllBookmarks>
    </BookmarkRow>
  </header>
);

const SideNav = () => (
  <Sidebar aria-label="Application">
    <BrandLink href="#" aria-label="Home"><Rhino s={18} /></BrandLink>
    {sideLinks.map(([label, icon]) => (
      <SideLink key={label} href="#" aria-label={label}>{icon}</SideLink>
    ))}
    <SideLink $push href="#" aria-label="Help"><FaRegQuestionCircle size={13} /></SideLink>
    <SideLink href="#" aria-label="Settings"><FaCog size={13} /></SideLink>
    <SideLink href="#" aria-label="Account"><FaUser size={13} /></SideLink>
  </Sidebar>
);

const SelectField = ({ id, label, value, disabled }: { id: string; label: string; value: string; disabled?: boolean }) => (
  <Field>
    <Label htmlFor={id}>{label}</Label>
    <Control $disabled={disabled}>
      <Select id={id} defaultValue={value} disabled={disabled}>
        <option>{value}</option>
      </Select>
      <Caret />
    </Control>
  </Field>
);

const ProposalForm = () => (
  <Form onSubmit={(e) => e.preventDefault()}>
    <Columns>
      <SelectField id="template" label="Document Template" value="Testing Template - Breakout" disabled />
      <SelectField id="type" label="Proposal Type" value="Proposal" />
    </Columns>
    <DescriptionLabel $large htmlFor="description">Description</DescriptionLabel>
    <Editor>
      <EditorToolbar>
        <Tools names={["Bold", "Italic", "Underline", "Strike"]} />
        <Tools names={["Blockquote", "Code"]} />
        <Tools names={["Heading 1", "Heading 2"]} />
        <Tools names={["Numbered list", "Bulleted list"]} />
        <Tools names={["Subscript", "Superscript"]} />
        <Tools names={["Outdent", "Indent"]} />
        <Tools names={["Direction"]} />
        <FormatPicker label="Size" value="Normal" w={58} />
        <FormatPicker label="Heading" value="Normal" w={58} />
        <Tools names={["Text color", "Background color"]} />
        <FormatPicker label="Font" value="Sans Serif" w={64} />
        <Tools names={["Align"]} />
        <Tools names={["Link"]} />
        <Tools names={["Clear formatting"]} />
      </EditorToolbar>
      <EditorText id="description" placeholder="Insert text here ..." />
    </Editor>
    <EditorActions>
      <SquareButton type="button" $w={19} aria-label="Accept"><FaCheck size={9} color="#2f7a2f" /></SquareButton>
      <SquareButton type="button" $w={17} aria-label="Discard"><FaTimes size={9} /></SquareButton>
    </EditorActions>
    <LibraryButton type="button"><FaBook size={9} />Library</LibraryButton>
    <Columns>
      <SelectField id="issuance" label="Current Drawing Issuance" value="Issued for Construction" />
      <Field>
        <Label htmlFor="date">Drawing Date</Label>
        <Control>
          <DateInput id="date" defaultValue="Aug 13, 2024" />
          <CalendarButton type="button" aria-label="Choose date"><CalendarSolid /></CalendarButton>
        </Control>
      </Field>
    </Columns>
    <AddButton type="button"><FaPlusCircle size={10} />Add Additional Drawing Issuance</AddButton>
    <LabelRow>
      <Label $large htmlFor="addendums">Addendums</Label>
      <FaPencilAlt size={8} color="#b5b5b5" />
    </LabelRow>
    <Addendums id="addendums" />
    <Hint>Double click to edit</Hint>
    <FormActions>
      <FormButton type="button">CANCEL</FormButton>
      <FormButton $primary type="submit">SAVE</FormButton>
      <FormButton $primary type="submit">SAVE AND COMPLETE</FormButton>
    </FormActions>
  </Form>
);

export default function App() {
  return (
    <Screen>
      <GlobalStyle />
      <BrowserChrome />
      <Workspace>
        <SideNav />
        <Main>
          <Card>
            <CardHeader>
              <BackLink href="#"><FaAngleLeft size={6} />Back to Project</BackLink>
              <Title>Proposal Builder</Title>
            </CardHeader>
            <StepTabs role="tablist">
              {steps.map((s, i) => (
                <StepTab key={s} role="tab" aria-selected={i === 0} $active={i === 0}>{s}</StepTab>
              ))}
            </StepTabs>
            <ProposalForm />
          </Card>
        </Main>
      </Workspace>
      <Taskbar>
        <Weather>
          <svg width="14" height="14" viewBox="0 0 28 28">
            <circle cx="14" cy="14" r="13" fill="#f59a1a" />
            <circle cx="11" cy="11" r="8" fill="#fbb52d" />
          </svg>
          <Stack><span>61°F</span><span>Sunny</span></Stack>
        </Weather>
        <TaskIcons>
          <TaskButton aria-label="Start"><Windows /></TaskButton>
          <SearchBox>
            <MdSearch size={12} />
            <SearchInput placeholder="Search" aria-label="Search" />
            <Moon />
          </SearchBox>
          {taskApps.map(([label, icon, mark]) => (
            <TaskButton key={label} aria-label={label} $mark={mark}>{icon}</TaskButton>
          ))}
        </TaskIcons>
        <Tray>
          <Stack><span>9:18 AM</span><span>8/19/2024</span></Stack>
          <Copilot />
        </Tray>
      </Taskbar>
      <Recorder>
        <CameraButton aria-label="Camera"><Camera /></CameraButton>
        <RecorderPill>
          <StopButton aria-label="Stop">
            <svg width="10" height="10" viewBox="0 0 10 10"><rect width="10" height="10" rx="1" fill="#fff" /></svg>
          </StopButton>
          <RecorderButton aria-label="Pause"><MdPause size={13} /></RecorderButton>
          <RecorderButton aria-label="Rewind"><MdFastRewind size={14} /></RecorderButton>
          <Elapsed>0:00</Elapsed>
          <RecorderDivider />
          <RecorderButton aria-label="Blur"><MdBlurOn size={14} /></RecorderButton>
          <RecorderButton aria-label="Restart"><MdReplay size={12} /></RecorderButton>
          <RecorderButton aria-label="Delete"><Trash /></RecorderButton>
        </RecorderPill>
      </Recorder>
      <Pointer width="13" height="20" viewBox="0 0 13 20">
        <path d="M1 1v15l4-3 2 6 2-1-2-5h5z" fill="#fff" stroke="#222" strokeWidth="1" />
      </Pointer>
    </Screen>
  );
}
